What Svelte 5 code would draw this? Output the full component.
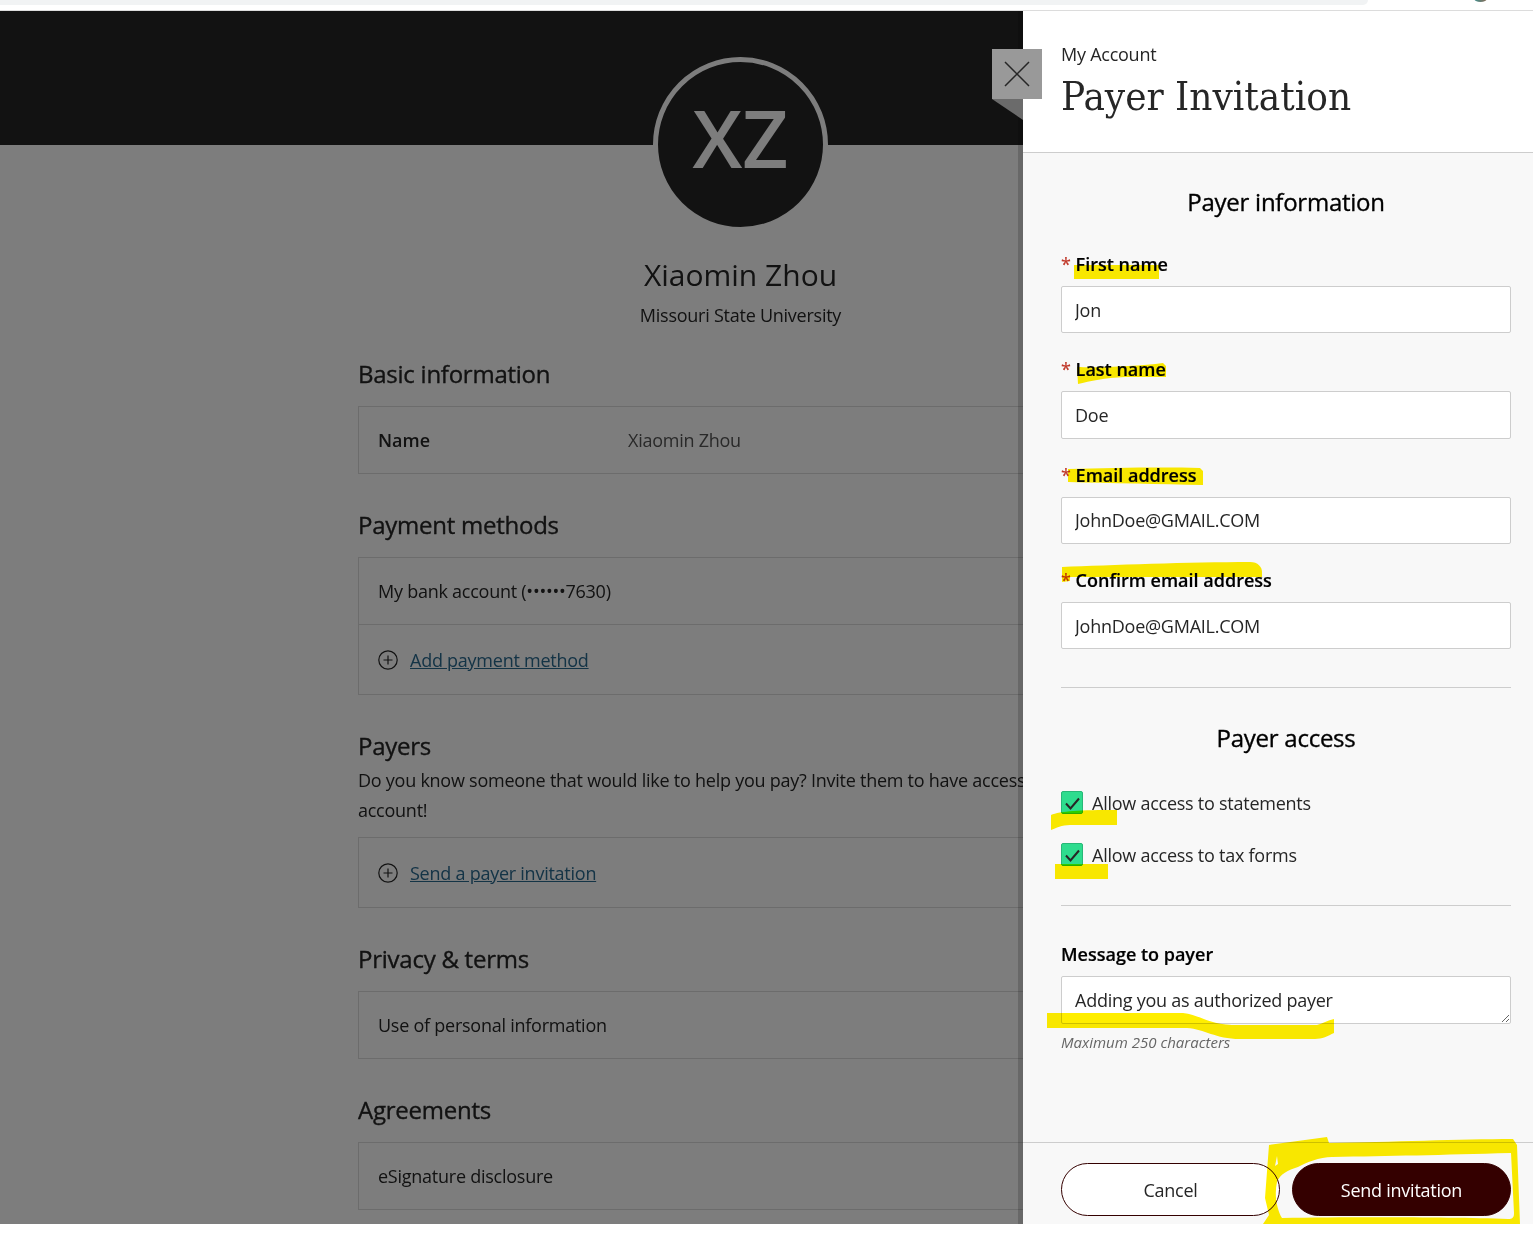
<script>
	const basic = [{ label: 'Name', value: 'Xiaomin Zhou' }];
	const fields = [
		{ label: 'First name', value: 'Jon' },
		{ label: 'Last name', value: 'Doe' },
		{ label: 'Email address', value: 'JohnDoe@GMAIL.COM' },
		{ label: 'Confirm email address', value: 'JohnDoe@GMAIL.COM' }
	];
	const access = ['Allow access to statements', 'Allow access to tax forms'];
</script>

{#snippet plus()}
	<svg class="plus" viewBox="0 0 20 20" width="20" height="20" aria-hidden="true">
		<circle cx="10" cy="10" r="9.2" fill="none" stroke="#262626" stroke-width="1.2" />
		<path d="M10 5.5v9M5.5 10h9" stroke="#262626" stroke-width="1.2" />
	</svg>
{/snippet}

<div class="browser-edge">
	<div class="address"></div>
	<div class="user-dot"></div>
</div>
<div class="screen">
	<main class="profile">
		<div class="hero"></div>
		<div class="avatar">XZ</div>
		<h1>Xiaomin Zhou</h1>
		<p class="school">Missouri State University</p>

		<div class="column">
			<h2>Basic information</h2>
			<div class="card">
				{#each basic as row}
					<div class="row name-row"><strong>{row.label}</strong><span>{row.value}</span></div>
				{/each}
			</div>

			<h2>Payment methods</h2>
			<div class="card">
				<div class="row">My bank account (••••••7630)</div>
				<div class="row add">{@render plus()}<a href="#pay">Add payment method</a></div>
			</div>

			<h2 class="tight">Payers</h2>
			<p class="lead">Do you know someone that would like to help you pay? Invite them to have access to your account!</p>
			<div class="card">
				<div class="row add">{@render plus()}<a href="#invite">Send a payer invitation</a></div>
			</div>

			<h2>Privacy &amp; terms</h2>
			<div class="card">
				<div class="row">Use of personal information</div>
			</div>

			<h2>Agreements</h2>
			<div class="card">
				<div class="row">eSignature disclosure</div>
			</div>
		</div>
		<div class="scrim"></div>
	</main>

	<aside class="drawer">
		<header>
			<span class="crumb">My Account</span>
			<div class="title">Payer Invitation</div>
		</header>

		<form class="body">
			<h3>Payer information</h3>
			{#each fields as field}
				<div class="field">
					<label><span class="req">*</span> {field.label}</label>
					<input type="text" value={field.value} />
				</div>
			{/each}

			<hr class="first-rule" />
			<h3>Payer access</h3>
			<div class="checks">
				{#each access as item}
					<div class="check">
						<span class="box">
							<svg viewBox="0 0 22 22" width="22" height="22" aria-hidden="true">
								<path d="M5 11.5l4.5 5L18 6.5" fill="none" stroke="#262626" stroke-width="2" />
							</svg>
						</span>
						{item}
					</div>
				{/each}
			</div>
			<hr class="second-rule" />

			<label class="plain">Message to payer</label>
			<textarea>Adding you as authorized payer</textarea>
			<div class="hint">Maximum 250 characters</div>
		</form>

		<footer>
			<button class="cancel" type="button">Cancel</button>
			<button class="send" type="button">Send invitation</button>
		</footer>
	</aside>

	<button class="close" type="button" aria-label="Close">
		<svg viewBox="0 0 26 26" width="26" height="26" aria-hidden="true">
			<path d="M1 1l24 24M25 1L1 25" stroke="#262626" stroke-width="1.5" fill="none" />
		</svg>
	</button>
	<div class="fold"></div>

	<!-- marker scribbles drawn on top of the screenshot -->
	<svg class="marker" viewBox="0 0 1533 1213" width="1533" height="1213" aria-hidden="true">
		<g fill="#ffee00" transform="translate(0 -11)">
			<path d="M1074 265H1159V279H1074Z" />
			<path d="M1077 367C1100 368 1140 366 1163 363L1166 366V377H1125C1105 378 1090 381 1078 384Z" />
			<path d="M1068 469C1110 468 1160 467 1200 468L1203 471V485C1160 484 1110 483 1068 482Z" />
			<path d="M1062 567C1110 565 1190 562 1250 562C1258 562 1262 567 1262 572V577H1070V581L1062 582Z" />
			<path d="M1051 815C1060 811 1080 810 1117 810V825H1070C1062 825 1056 828 1051 830Z" />
			<path d="M1055 864H1108V879H1055Z" />
			<path d="M1047 1013H1183C1200 1015 1208 1024 1232 1025H1317C1322 1024 1328 1020 1334 1019V1033C1328 1036 1322 1039 1315 1039H1240C1215 1039 1205 1029 1187 1028H1047Z" />
			<path fill-rule="evenodd" d="M1269 1145L1327 1137L1329 1143C1390 1142 1460 1139 1513 1139L1517 1145L1520 1224H1263L1269 1215L1265 1198ZM1277 1156L1275 1166L1278 1164ZM1332 1157C1320 1157 1305 1163 1298 1167C1288 1170 1280 1174 1277 1182C1274 1195 1277 1210 1282 1218C1350 1217 1450 1217 1508 1219C1513 1219 1514 1217 1514 1213L1511 1153C1440 1155 1390 1156 1332 1157Z" />
		</g>
	</svg>
</div>

<style>
	:global(body) {
		margin: 0;
		background: #fff;
		font-family: 'Open Sans', sans-serif;
		color: #262626;
	}

	.browser-edge {
		position: relative;
		height: 10px;
		border-bottom: 1px solid #dcdcdc;
		background: #fff;
		overflow: hidden;
	}

	.address {
		width: 1368px;
		height: 5px;
		background: #f1f3f4;
		border-bottom-right-radius: 12px;
	}

	.user-dot {
		position: absolute;
		left: 1474px;
		top: -5px;
		width: 13px;
		height: 7px;
		border-radius: 50%;
		background: linear-gradient(90deg, #3f8f8f, #8a6a55);
	}

	.screen {
		position: relative;
		display: flex;
		height: 1213px;
		overflow: hidden;
	}

	.profile {
		position: relative;
		width: 1023px;
		flex: none;
		overflow: hidden;
		background: #fff;
		text-align: center;
		font-size: 18px;
		letter-spacing: -0.25px;
	}

	.hero {
		height: 134px;
		background: #262626;
	}

	.avatar {
		width: 165px;
		height: 165px;
		margin: -88px auto 0;
		position: relative;
		left: 229px;
		border: 5px solid #fff;
		border-radius: 50%;
		background: #262626;
		color: #fff;
		font-size: 80px;
		font-weight: 600;
		line-height: 149px;
		letter-spacing: 0;
	}

	h1 {
		position: relative;
		left: 229px;
		margin: 24px 0 0;
		font-size: 30px;
		font-weight: 400;
		line-height: 38px;
		letter-spacing: 0;
	}

	.school {
		position: relative;
		left: 229px;
		margin: 9px 0 0;
		line-height: 24px;
	}

	.column {
		width: 765px;
		margin: 30px 0 0 358px;
		text-align: left;
	}

	h2 {
		margin: 0 0 15px;
		font-size: 24px;
		font-weight: 400;
		line-height: 34px;
		letter-spacing: -0.25px;
		-webkit-text-stroke: 0.35px currentColor;
		color: #262626;
	}

	h2.tight {
		margin-bottom: 2px;
	}

	.lead {
		margin: 0 0 12px;
		line-height: 30px;
	}

	.card {
		border: 1px solid #dcdcdc;
		margin-bottom: 34px;
	}

	.row {
		display: flex;
		align-items: center;
		height: 66px;
		padding: 0 19px;
		border-top: 1px solid #dcdcdc;
	}

	.row:first-child {
		border-top: 0;
	}

	.row.add {
		height: 69px;
		gap: 12px;
	}

	.name-row strong {
		width: 250px;
		font-weight: 600;
		letter-spacing: 0;
	}

	.name-row span {
		color: #555;
	}

	a {
		color: #2a6a90;
	}

	.scrim {
		position: absolute;
		inset: 0;
		background: rgba(0, 0, 0, 0.51);
	}

	.drawer {
		flex: 1;
		display: flex;
		flex-direction: column;
		background: #f8f8f8;
		box-shadow: -5px 0 0 rgba(0, 0, 0, 0.16);
		position: relative;
		font-size: 18px;
		letter-spacing: -0.25px;
	}

	header {
		height: 142px;
		box-sizing: border-box;
		padding: 31px 22px 0 38px;
		background: #fff;
		border-bottom: 1px solid #cdcdcd;
	}

	.crumb {
		display: block;
		font-size: 18px;
		line-height: 24px;
	}

	.title {
		margin-top: 6px;
		font-family: 'DejaVu Serif', 'Liberation Serif', serif;
		font-stretch: condensed;
		font-size: 40px;
		line-height: 48px;
		letter-spacing: 0;
	}

	.body {
		flex: 1;
		padding: 32px 22px 0 38px;
		min-height: 0;
	}

	h3 {
		margin: 0 0 33px;
		text-align: center;
		font-size: 24px;
		font-weight: 400;
		line-height: 34px;
		letter-spacing: -0.25px;
		-webkit-text-stroke: 0.35px currentColor;
		color: #000;
	}

	.field {
		margin-bottom: 24px;
	}

	label {
		display: block;
		margin-bottom: 10px;
		font-size: 18px;
		font-weight: 600;
		line-height: 24px;
		letter-spacing: 0;
		-webkit-text-stroke: 0.2px currentColor;
		color: #000;
	}

	.req {
		color: #c0392b;
		font-weight: 400;
	}

	input,
	textarea {
		display: block;
		width: 100%;
		box-sizing: border-box;
		height: 47.33px;
		padding: 0 13px;
		border: 1px solid #cdcdcd;
		border-radius: 2px;
		background: #fff;
		font: 18px 'Open Sans', sans-serif;
		letter-spacing: -0.25px;
		color: #262626;
		outline: none;
	}

	textarea {
		height: 48px;
		padding: 10px 13px;
		line-height: 26px;
		margin-top: 10px;
	}

	hr {
		border: 0;
		border-top: 1px solid #cdcdcd;
		margin: 0;
	}

	.first-rule {
		margin: 38px 0 33px;
	}

	.checks {
		display: flex;
		flex-direction: column;
		gap: 29px;
		margin-top: 36px;
	}

	.check {
		display: flex;
		align-items: center;
		height: 23px;
		gap: 9px;
	}

	.box {
		width: 22px;
		height: 23px;
		box-sizing: border-box;
		border-radius: 2px;
		background: #2edc8e;
		border: 1px solid #27b877;
		display: flex;
		align-items: center;
		justify-content: center;
	}

	.box svg {
		margin: -1px;
	}

	.second-rule {
		margin: 39px 0 36px;
	}

	.plain {
		margin-bottom: 0;
	}

	.hint {
		margin-top: 8px;
		font-size: 15px;
		font-style: italic;
		line-height: 20px;
		letter-spacing: 0;
		color: #666;
	}

	footer {
		display: flex;
		gap: 12px;
		height: 82px;
		box-sizing: border-box;
		padding: 20px 22px 0 38px;
		border-top: 1px solid #cdcdcd;
	}

	button {
		font: 18px 'Open Sans', sans-serif;
		letter-spacing: -0.25px;
	}

	footer button {
		flex: 1;
		height: 53px;
		border-radius: 27px;
		border: 1px solid #340000;
		cursor: pointer;
	}

	.cancel {
		background: #fff;
		color: #262626;
	}

	.send {
		background: #340000;
		color: #fff;
	}

	.close {
		position: absolute;
		left: 992px;
		top: 38px;
		width: 50px;
		height: 50px;
		padding: 0;
		border: 0;
		background: #999;
		display: flex;
		align-items: center;
		justify-content: center;
	}

	.fold {
		position: absolute;
		left: 992px;
		top: 88px;
		width: 31px;
		height: 21px;
		background: #6b6b6b;
		clip-path: polygon(0 0, 100% 0, 100% 100%);
	}

	.marker {
		position: absolute;
		left: 0;
		top: 0;
		mix-blend-mode: multiply;
		pointer-events: none;
	}
</style>
